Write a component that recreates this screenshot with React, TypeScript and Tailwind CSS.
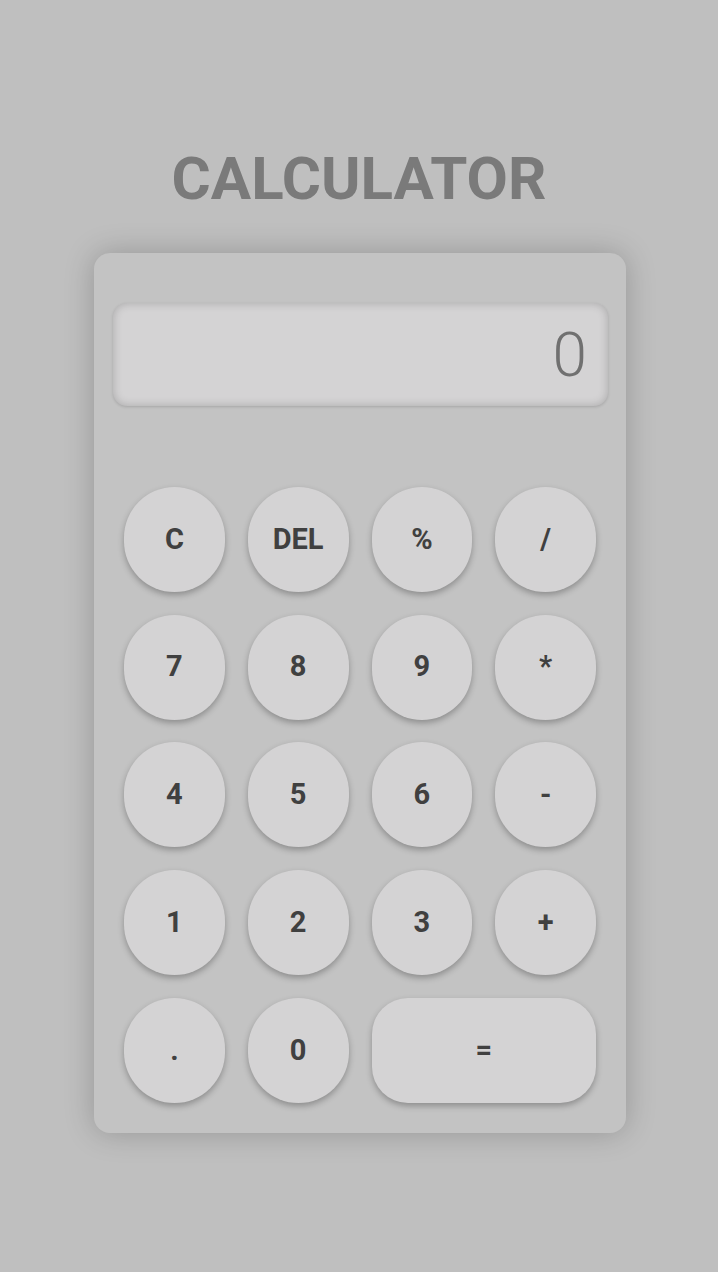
const keys: { label: string; wide?: boolean }[] = [
  { label: "C" },
  { label: "DEL" },
  { label: "%" },
  { label: "/" },
  { label: "7" },
  { label: "8" },
  { label: "9" },
  { label: "*" },
  { label: "4" },
  { label: "5" },
  { label: "6" },
  { label: "-" },
  { label: "1" },
  { label: "2" },
  { label: "3" },
  { label: "+" },
  { label: "." },
  { label: "0" },
  { label: "=", wide: true },
];

export default function App() {
  return (
    <div
      className="min-h-[1272px] w-full bg-[#bfbfbf] flex flex-col items-center pt-[149px]"
      style={{ fontFamily: "Roboto, 'Liberation Sans', sans-serif" }}
    >
      <h1 className="text-[60px] leading-none font-bold text-[#7a7a7a]">CALCULATOR</h1>

      <div className="mt-[44px] ml-[2px] w-[532px] rounded-2xl bg-[#c3c3c3] pl-[19px] pr-[18px] pt-[50px] pb-[30px] shadow-[0_0_30px_rgba(0,0,0,0.22)]">
        <div className="h-[103px] rounded-[14px] bg-[#d4d3d4] flex items-center justify-end pr-[21px] shadow-[inset_0_0_10px_rgba(0,0,0,0.2),0_1px_3px_rgba(0,0,0,0.15)]">
          <span className="text-[62px] leading-none font-light text-[#707070]">0</span>
        </div>

        <div className="mt-[81px] pl-[11px] pr-[12px] grid grid-cols-4 gap-x-[23px] gap-y-[22.7px]">
          {keys.map((k) => (
            <button
              key={k.label}
              className={`h-[105px] bg-[#d4d3d4] text-[#404040] text-[29px] font-bold flex items-center justify-center shadow-[0_3px_6px_rgba(0,0,0,0.28)] ${
                k.wide ? "col-span-2 rounded-[36px]" : "rounded-full"
              }`}
            >
              {k.label}
            </button>
          ))}
        </div>
      </div>
    </div>
  );
}
